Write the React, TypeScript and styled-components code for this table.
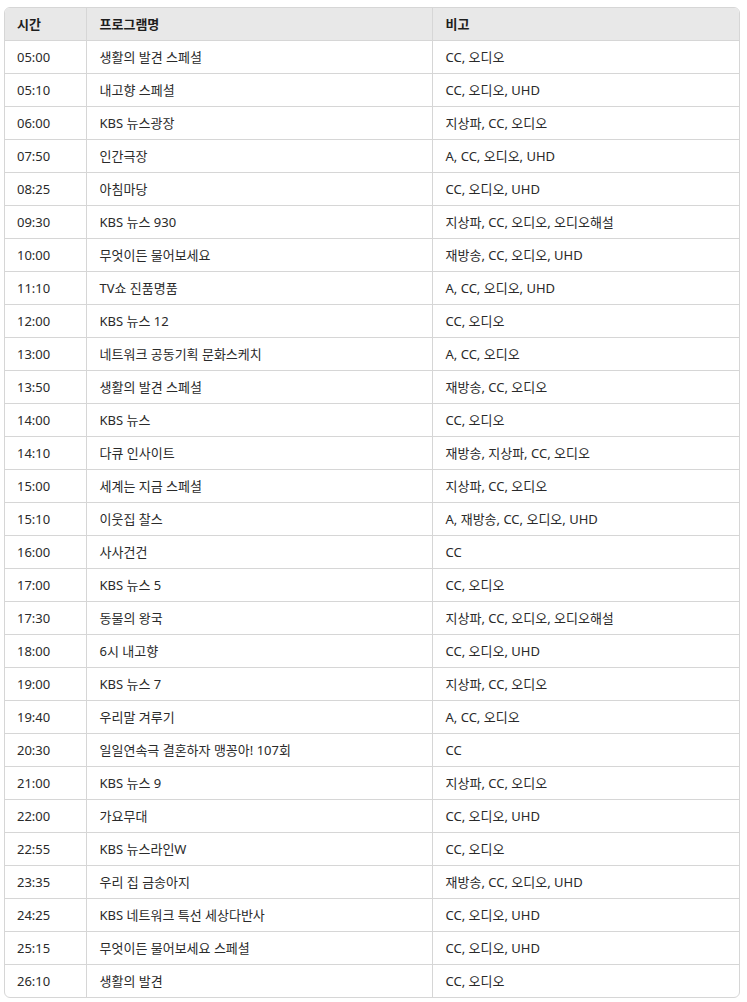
import React from "react";
import styled, { createGlobalStyle } from "styled-components";

const Global = createGlobalStyle`
  html, body { margin: 0; padding: 0; background: #ffffff; }
  body { font-family: "Noto Sans", "Noto Sans CJK KR", sans-serif; }
`;

const Page = styled.div`
  padding: 7px 7px 0 4px;
`;

const Wrap = styled.div`
  border: 1px solid #d6d6d6;
  border-radius: 6px;
  overflow: hidden;
  width: 734px;
`;

const Table = styled.table`
  border-collapse: collapse;
  width: 100%;
  table-layout: fixed;
  font-size: 13px;
  color: #2a2a2a;
`;

const Th = styled.th<{ $w?: number }>`
  ${(p) => (p.$w ? `width: ${p.$w}px;` : "")}
  background: #e8e8e8;
  text-align: left;
  font-weight: 700;
  height: 32px;
  padding: 0 12px 0 13px;
  border-left: 1px solid #d6d6d6;
  box-sizing: border-box;
  color: #1e1e1e;
  &:first-child { border-left: none; padding-left: 12px; }
`;

const Td = styled.td`
  height: 33px;
  padding: 0 12px 0 13px;
  border-left: 1px solid #d6d6d6;
  border-top: 1px solid #d6d6d6;
  box-sizing: border-box;
  white-space: nowrap;
  &:first-child { border-left: none; padding-left: 12px; }
`;

const Row = styled.tr``;

const data: [string, string, string][] = [
  ["05:00", "생활의 발견 스페셜", "CC, 오디오"],
  ["05:10", "내고향 스페셜", "CC, 오디오, UHD"],
  ["06:00", "KBS 뉴스광장", "지상파, CC, 오디오"],
  ["07:50", "인간극장", "A, CC, 오디오, UHD"],
  ["08:25", "아침마당", "CC, 오디오, UHD"],
  ["09:30", "KBS 뉴스 930", "지상파, CC, 오디오, 오디오해설"],
  ["10:00", "무엇이든 물어보세요", "재방송, CC, 오디오, UHD"],
  ["11:10", "TV쇼 진품명품", "A, CC, 오디오, UHD"],
  ["12:00", "KBS 뉴스 12", "CC, 오디오"],
  ["13:00", "네트워크 공동기획 문화스케치", "A, CC, 오디오"],
  ["13:50", "생활의 발견 스페셜", "재방송, CC, 오디오"],
  ["14:00", "KBS 뉴스", "CC, 오디오"],
  ["14:10", "다큐 인사이트", "재방송, 지상파, CC, 오디오"],
  ["15:00", "세계는 지금 스페셜", "지상파, CC, 오디오"],
  ["15:10", "이웃집 찰스", "A, 재방송, CC, 오디오, UHD"],
  ["16:00", "사사건건", "CC"],
  ["17:00", "KBS 뉴스 5", "CC, 오디오"],
  ["17:30", "동물의 왕국", "지상파, CC, 오디오, 오디오해설"],
  ["18:00", "6시 내고향", "CC, 오디오, UHD"],
  ["19:00", "KBS 뉴스 7", "지상파, CC, 오디오"],
  ["19:40", "우리말 겨루기", "A, CC, 오디오"],
  ["20:30", "일일연속극 결혼하자 맹꽁아! 107회", "CC"],
  ["21:00", "KBS 뉴스 9", "지상파, CC, 오디오"],
  ["22:00", "가요무대", "CC, 오디오, UHD"],
  ["22:55", "KBS 뉴스라인W", "CC, 오디오"],
  ["23:35", "우리 집 금송아지", "재방송, CC, 오디오, UHD"],
  ["24:25", "KBS 네트워크 특선 세상다반사", "CC, 오디오, UHD"],
  ["25:15", "무엇이든 물어보세요 스페셜", "CC, 오디오, UHD"],
  ["26:10", "생활의 발견", "CC, 오디오"],
];

export default function App() {
  return (
    <>
      <Global />
      <Page>
        <Wrap>
          <Table>
            <thead>
              <tr>
                <Th $w={81}>시간</Th>
                <Th $w={346}>프로그램명</Th>
                <Th>비고</Th>
              </tr>
            </thead>
            <tbody>
              {data.map(([t, p, n]) => (
                <Row key={t}>
                  <Td>{t}</Td>
                  <Td>{p}</Td>
                  <Td>{n}</Td>
                </Row>
              ))}
            </tbody>
          </Table>
        </Wrap>
      </Page>
    </>
  );
}
